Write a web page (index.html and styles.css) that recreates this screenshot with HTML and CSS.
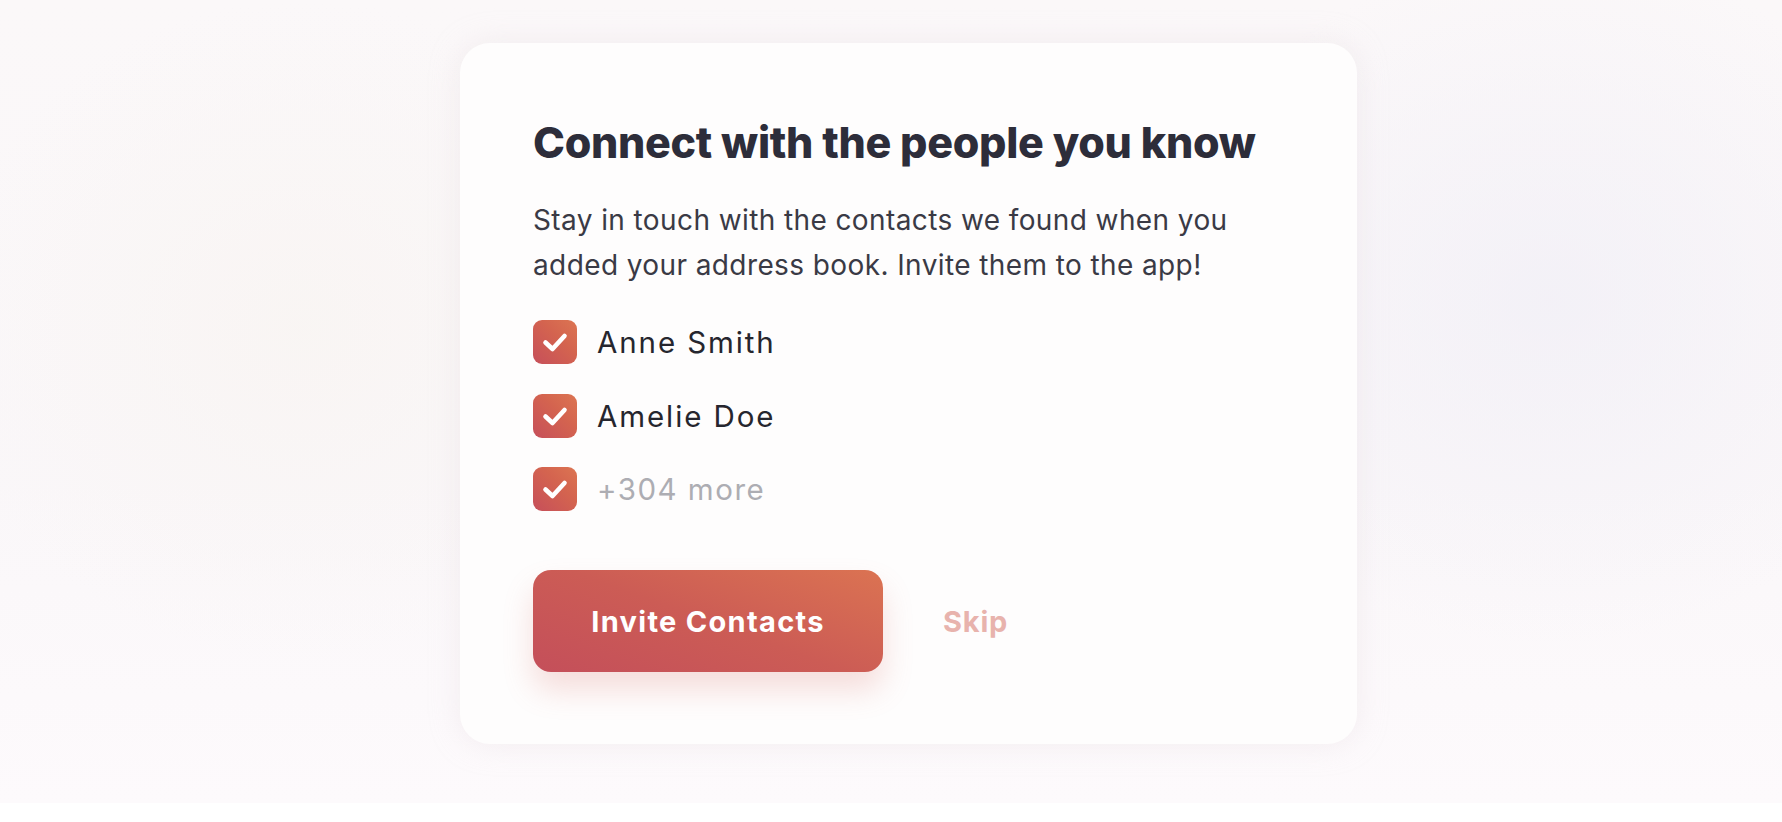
FILE: index.html
```html
<!DOCTYPE html>
<html lang="en">
<head>
<meta charset="utf-8">
<title>Connect with the people you know</title>
<link rel="stylesheet" href="styles.css">
</head>
<body>
<div class="backdrop">
  <section class="card">
    <h1 class="title">Connect with the people you know</h1>
    <p class="lead">Stay in touch with the contacts we found when you added your address book. Invite them to the app!</p>
    <ul class="contacts">
      <li class="contact">
        <span class="check"><svg viewBox="0 0 44 44" width="44" height="44"><path d="M12.5 22.5 L19.5 29 L31.5 16" fill="none" stroke="#fff" stroke-width="4.6" stroke-linecap="round" stroke-linejoin="round"/></svg></span>
        <span class="name">Anne Smith</span>
      </li>
      <li class="contact">
        <span class="check"><svg viewBox="0 0 44 44" width="44" height="44"><path d="M12.5 22.5 L19.5 29 L31.5 16" fill="none" stroke="#fff" stroke-width="4.6" stroke-linecap="round" stroke-linejoin="round"/></svg></span>
        <span class="name">Amelie Doe</span>
      </li>
      <li class="contact">
        <span class="check"><svg viewBox="0 0 44 44" width="44" height="44"><path d="M12.5 22.5 L19.5 29 L31.5 16" fill="none" stroke="#fff" stroke-width="4.6" stroke-linecap="round" stroke-linejoin="round"/></svg></span>
        <span class="name more">+304 more</span>
      </li>
    </ul>
    <div class="actions">
      <button class="btn-primary">Invite Contacts</button>
      <button class="btn-skip">Skip</button>
    </div>
  </section>
</div>
</body>
</html>
```
FILE: styles.css
```css
html, body {
  margin: 0;
  padding: 0;
  background: #ffffff;
}
body {
  font-family: Inter, "Noto Sans", "Liberation Sans", sans-serif;
  width: 1782px;
  height: 822px;
  overflow: hidden;
}
.backdrop {
  height: 803px;
  box-sizing: border-box;
  padding: 43px 0 0 460px;
  background:
    radial-gradient(ellipse 520px 460px at 1550px 300px, rgba(240, 238, 246, 0.7), rgba(240, 238, 246, 0) 75%),
    radial-gradient(ellipse 480px 440px at 300px 330px, rgba(248, 244, 241, 0.7), rgba(248, 244, 241, 0) 75%),
    linear-gradient(180deg, #fbf8f9 0%, #faf7f9 60%, #fdfafc 100%);
}
.card {
  width: 897px;
  height: 701px;
  box-sizing: border-box;
  padding: 73px 73px 73px 73px;
  background: #fefdfd;
  border-radius: 30px;
  box-shadow: 0 0 30px rgba(225, 215, 222, 0.35);
}
.title {
  margin: 0;
  font-size: 43px;
  line-height: 53px;
  font-weight: 800;
  letter-spacing: -0.3px;
  color: #2d2d3a;
  white-space: nowrap;
}
.lead {
  margin: 29px 0 0;
  font-size: 28px;
  line-height: 45px;
  font-weight: 400;
  letter-spacing: 0.4px;
  color: #3a3a45;
  width: 740px;
}
.contacts {
  list-style: none;
  margin: 32px 0 0;
  padding: 0;
  display: flex;
  flex-direction: column;
  gap: 29.5px;
}
.contact {
  display: flex;
  align-items: center;
  gap: 20px;
  height: 44px;
}
.check {
  width: 44px;
  height: 44px;
  border-radius: 9px;
  background: linear-gradient(45deg, #c64f5a 0%, #d4644f 60%, #dc7552 100%);
  display: flex;
}
.name {
  font-size: 29.5px;
  font-weight: 400;
  letter-spacing: 1.9px;
  color: #26262e;
}
.name.more {
  color: #adadb3;
  letter-spacing: 1.5px;
}
.actions {
  margin-top: 59px;
  display: flex;
  align-items: center;
  gap: 60px;
}
.btn-primary {
  width: 350px;
  height: 102px;
  border: 0;
  border-radius: 18px;
  background: linear-gradient(20deg, #c44f5a 0%, #cc5c55 50%, #db7352 100%);
  color: #ffffff;
  font-family: inherit;
  font-size: 29px;
  font-weight: 700;
  letter-spacing: 1.3px;
  box-shadow: 0 18px 30px rgba(214, 110, 100, 0.22);
  padding: 0;
}
.btn-skip {
  border: 0;
  background: none;
  padding: 0;
  font-family: inherit;
  font-size: 29px;
  font-weight: 700;
  letter-spacing: 0.8px;
  color: #e8b3ad;
}
```
